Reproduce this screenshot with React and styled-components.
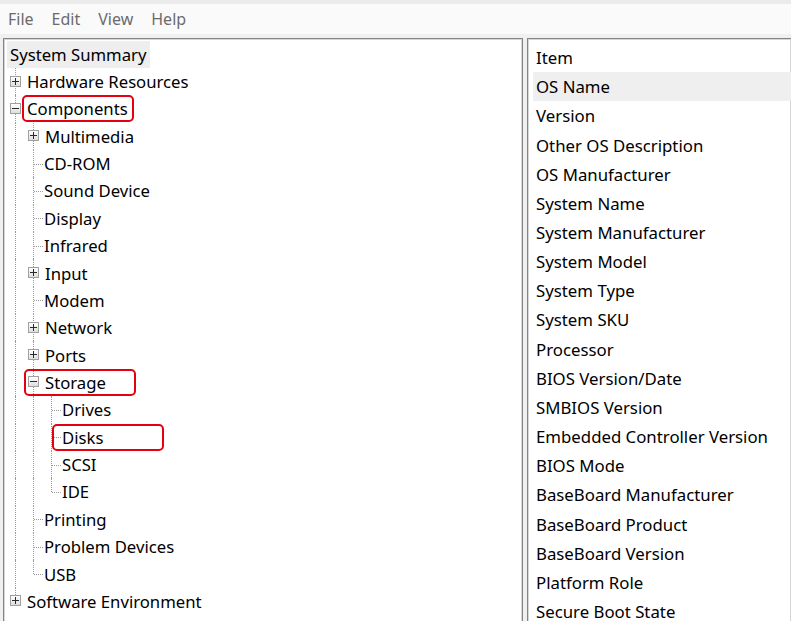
import styled, { createGlobalStyle } from "styled-components";

const GlobalStyle = createGlobalStyle`
  html, body {
    margin: 0;
    padding: 0;
    background: #f0f0f0;
    overflow: hidden;
  }
  body {
    font-family: "Noto Sans", "Open Sans", sans-serif;
    color: #000;
  }
`;

const ROW_H = 27.37;
const COL_W = 18;

const Window = styled.div`
  width: 791px;
  height: 621px;
  display: flex;
  flex-direction: column;
  background: #f0f0f0;
  border-top: 4px solid #ebebeb;
  box-sizing: border-box;
  overflow: hidden;
`;

const MenuBar = styled.div`
  height: 30px;
  display: flex;
  align-items: center;
  padding-left: 8px;
  background: #fafafa;
`;

const MenuItem = styled.span`
  font-size: 16px;
  color: #6b6b6b;
  margin-right: ${(p) => p.$gap}px;
`;

const Body = styled.div`
  flex: 1;
  display: flex;
  gap: 4px;
  padding: 4px 0 0 3px;
  min-height: 0;
`;

const Pane = styled.div`
  background: #fff;
  border: 1px solid #858585;
  border-bottom: none;
  box-shadow: inset 1px 1px 0 #d6d6d6, inset -1px 0 0 #d6d6d6;
  box-sizing: border-box;
  overflow: hidden;
`;

const TreePane = styled(Pane)`
  width: 520px;
  padding: 1.5px 0 0 3px;
`;

const ListPane = styled(Pane)`
  flex: 1;
  border-right: none;
  padding: 4px 0 0 5px;
`;

const RootLabel = styled.div`
  display: inline-flex;
  align-items: center;
  height: ${ROW_H}px;
  padding: 0 3px;
  background: #eeeeee;
  font-size: 16.7px;
`;

const Row = styled.div`
  display: flex;
  align-items: center;
  height: ${ROW_H}px;
`;

const Guide = styled.div`
  position: relative;
  width: ${COL_W}px;
  height: 100%;
  flex: none;
`;

const VLine = styled.div`
  position: absolute;
  left: 8px;
  top: 0;
  height: ${(p) => (p.$half ? "50%" : "100%")};
  border-left: 1px dotted #9a9a9a;
`;

const HLine = styled.div`
  position: absolute;
  left: 9px;
  top: 50%;
  width: 9px;
  border-top: 1px dotted #9a9a9a;
`;

const Expander = styled.div`
  position: absolute;
  left: 3px;
  top: 50%;
  margin-top: -6px;
  width: 11px;
  height: 11px;
  box-sizing: border-box;
  border: 1px solid #a0a0a0;
  background: linear-gradient(#ffffff, #dedede);
  z-index: 1;

  &::before {
    content: "";
    position: absolute;
    left: 1px;
    right: 1px;
    top: 4px;
    height: 1px;
    background: #2a2a2a;
  }

  &::after {
    content: "";
    display: ${(p) => (p.$open ? "none" : "block")};
    position: absolute;
    top: 1px;
    bottom: 1px;
    left: 4px;
    width: 1px;
    background: #2a2a2a;
  }
`;

const Label = styled.span`
  position: relative;
  font-size: 16.7px;
  white-space: nowrap;
  padding-left: ${(p) => p.$pad}px;
`;

const Highlight = styled.span`
  position: absolute;
  left: ${(p) => p.$left}px;
  top: 50%;
  margin-top: -13.5px;
  width: 112px;
  height: 27px;
  border: 2px solid #e3000f;
  border-radius: 5px;
  box-sizing: border-box;
`;

const ListRow = styled.div`
  height: 29.17px;
  display: flex;
  align-items: center;
  padding-left: 3px;
  font-size: 16.8px;
  white-space: nowrap;
  background: ${(p) => (p.$selected ? "#efefef" : "transparent")};
`;

const tree = [
  { label: "Hardware Resources", closed: true },
  {
    label: "Components",
    mark: -5,
    open: true,
    children: [
      { label: "Multimedia", closed: true },
      { label: "CD-ROM" },
      { label: "Sound Device" },
      { label: "Display" },
      { label: "Infrared" },
      { label: "Input", closed: true },
      { label: "Modem" },
      { label: "Network", closed: true },
      { label: "Ports", closed: true },
      {
        label: "Storage",
        mark: -21,
        open: true,
        children: [
          { label: "Drives" },
          { label: "Disks", mark: -10 },
          { label: "SCSI" },
          { label: "IDE" },
        ],
      },
      { label: "Printing" },
      { label: "Problem Devices" },
      { label: "USB" },
    ],
  },
  { label: "Software Environment", closed: true },
];

const flatten = (nodes, guides = [], out = []) => {
  nodes.forEach((n, i) => {
    const last = i === nodes.length - 1;
    out.push({ ...n, guides, last });
    if (n.open && n.children) flatten(n.children, [...guides, !last], out);
  });
  return out;
};

const rows = flatten(tree);

const items = [
  "OS Name",
  "Version",
  "Other OS Description",
  "OS Manufacturer",
  "System Name",
  "System Manufacturer",
  "System Model",
  "System Type",
  "System SKU",
  "Processor",
  "BIOS Version/Date",
  "SMBIOS Version",
  "Embedded Controller Version",
  "BIOS Mode",
  "BaseBoard Manufacturer",
  "BaseBoard Product",
  "BaseBoard Version",
  "Platform Role",
  "Secure Boot State",
];

const TreeRow = ({ node }) => {
  const hasBox = node.open || node.closed;
  const pad = hasBox ? 2 : 1;
  return (
    <Row>
      {node.guides.map((g, i) => (
        <Guide key={i}>{g && <VLine />}</Guide>
      ))}
      <Guide>
        <VLine $half={node.last} />
        {hasBox ? <Expander $open={node.open} /> : <HLine />}
      </Guide>
      <Label $pad={pad}>
        {node.mark !== undefined && <Highlight $left={node.mark + pad} />}
        {node.label}
      </Label>
    </Row>
  );
};

export default function App() {
  return (
    <>
      <GlobalStyle />
      <Window>
        <MenuBar>
          <MenuItem $gap={18}>File</MenuItem>
          <MenuItem $gap={18}>Edit</MenuItem>
          <MenuItem $gap={18}>View</MenuItem>
          <MenuItem $gap={0}>Help</MenuItem>
        </MenuBar>
        <Body>
          <TreePane>
            <RootLabel>System Summary</RootLabel>
            {rows.map((r, i) => (
              <TreeRow key={i} node={r} />
            ))}
          </TreePane>
          <ListPane>
            <ListRow>Item</ListRow>
            {items.map((it, i) => (
              <ListRow key={it} $selected={i === 0}>
                {it}
              </ListRow>
            ))}
          </ListPane>
        </Body>
      </Window>
    </>
  );
}
